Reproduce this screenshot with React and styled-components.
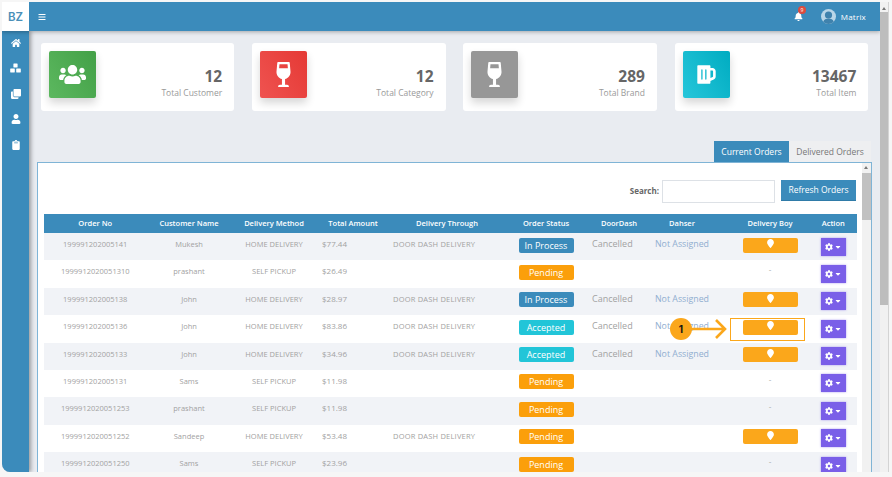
import React from 'react';
import styled, { createGlobalStyle } from 'styled-components';
import { FaHome, FaClone, FaUser, FaClipboard, FaBars, FaBell, FaUsers, FaWineGlassAlt, FaBeer, FaCog, FaCaretDown, FaMapMarker } from 'react-icons/fa';

const Global = createGlobalStyle`
  html, body { margin: 0; padding: 0; width: 892px; height: 477px; overflow: hidden; background: #f6f6f6; }
  body { font-family: "Open Sans", "Noto Sans", sans-serif; }
  * { box-sizing: border-box; }
`;

const Frame = styled.div`
  width: 892px; height: 477px; padding: 2px 0 5px 2px; display: flex; background: #f6f6f6;
`;
const Window = styled.div`
  flex: 1; min-width: 0; display: flex; overflow: hidden; border-radius: 0 0 0 8px; background: #e9ecf1;
`;
const Page = styled.div`
  width: 878px; flex: none; display: flex; flex-direction: column; min-width: 0; overflow: hidden;
`;
const TopBar = styled.header`
  height: 29px; flex: none; display: flex; align-items: center; background: #3b8bbb; color: #fff;
  box-shadow: 0 1px 4px rgba(0,0,0,.3); position: relative; z-index: 2;
`;
const Logo = styled.div`
  width: 27px; height: 29px; background: #fff; color: #4a8fb8; font: 600 11.5px "Inter", sans-serif;
  display: flex; align-items: center; justify-content: center;
`;
const Burger = styled.span` margin-left: 9px; font-size: 8px; display: flex; `;
const TopRight = styled.div` margin-left: auto; display: flex; align-items: center; padding-right: 14px; `;
const Bell = styled.span` position: relative; font-size: 9px; display: flex; margin-right: 18px; `;
const Badge = styled.span`
  position: absolute; top: -6px; left: 4px; width: 8px; height: 8px; border-radius: 50%; background: #dc4b3e;
  font: 5px/8px "Open Sans", sans-serif; text-align: center;
`;
const AvatarIcon = styled.svg` width: 15px; height: 15px; margin-right: 5px; display: block; `;
const UserName = styled.span` font-size: 8px; letter-spacing: .2px; `;
const Body = styled.div` flex: 1; display: flex; min-height: 0; `;
const Side = styled.nav`
  width: 27px; flex: none; background: #3b8bbb; display: flex; flex-direction: column; align-items: center;
  padding-top: 7px; gap: 15.4px; color: #fff; font-size: 10px; box-shadow: 2px 0 4px rgba(0,0,0,.35);
  svg { display: block; }
`;
const Main = styled.main` flex: 1; min-width: 0; padding: 11.5px 0 0 8px; `;
const Stats = styled.div` display: grid; grid-template-columns: repeat(4, 193.7px); gap: 17.7px; margin-left: 3.5px; `;
const Card = styled.div`
  height: 68px; background: #fff; border-radius: 3px; padding: 8px; display: flex; justify-content: space-between;
`;
const IconBox = styled.div`
  width: 47px; height: 47px; border-radius: 2px; color: #fff; font-size: ${p => p.$size}px; display: flex; align-items: center; justify-content: center;
  background: ${p => p.$bg}; box-shadow: 0 5px 8px rgba(0,0,0,.16);
`;
const StatText = styled.div` text-align: right; padding: 16px 4px 0 0; `;
const Num = styled.div` font: 700 15.5px/18px "Open Sans", sans-serif; color: #666; `;
const Label = styled.div` font: 8.5px/12px "Open Sans", sans-serif; color: #999; margin-top: 2.5px; `;
const Tabs = styled.div` display: flex; justify-content: flex-end; margin-top: 30px; width: 834px; `;
const Tab = styled.div`
  height: 21px; width: ${p => p.$w}px; text-align: center; font: 8.5px/21px "Open Sans", sans-serif;
  background: ${p => p.$on ? '#3b8bbb' : '#eeeff1'}; color: ${p => p.$on ? '#fff' : '#777'};
`;
const Panel = styled.section`
  width: 834.5px; height: 400px; background: #fff; border: 1px solid #7fb4d6; padding: 0 14.5px 0 5.5px; position: relative; overflow: hidden;
`;
const Scroll = styled.div`
  position: absolute; top: 0; right: 0; width: 9px; height: 100%; background: #f1f1f1;
  display: flex; flex-direction: column; align-items: center; padding-top: 3px;
`;
const Arrow = styled.span`
  width: 0; height: 0; border: 2px solid transparent; border-top: none; border-bottom: 3px solid #777;
`;
const Thumb = styled.div` width: 9px; height: 47px; margin-top: 4px; background: #c1c1c1; `;
const Tools = styled.div` height: 51px; display: flex; align-items: flex-start; justify-content: flex-end; padding-top: 17px; `;
const SearchLabel = styled.label` font: 700 8px/22px "Open Sans", sans-serif; color: #666; margin-right: 3px; `;
const SearchInput = styled.div` width: 113px; height: 23px; border: 1px solid #dde1e6; margin-right: 6px; `;
const Refresh = styled.button`
  width: 75px; height: 21px; border: none; border-bottom: 1px solid #2f7ba8; background: #3b8bbb; color: #fff; padding: 0; font: 8.5px "Open Sans", sans-serif;
`;
const Table = styled.table`
  width: 812.5px; border-collapse: collapse; table-layout: fixed; font: 7.5px "Open Sans", sans-serif;
  th { background: #3b8bbb; color: #fff; font-weight: 600; height: 19.5px; padding: 0; font-size: 7.5px; white-space: nowrap; }
  td { height: 27.4px; padding: 4px 0 0; color: #a2a2a2; text-align: center; vertical-align: top; line-height: 14px; white-space: nowrap; }
  td.amt { text-align: left; padding-left: 5px; font-size: 8px; }
  td.through { text-align: left; padding-left: 4px; letter-spacing: .2px; }
  td.door { font-size: 9px; text-align: left; padding-left: 5px; }
  td.wide { padding-top: 2px; font-size: 9px; }
  td.boy { padding: 2px 0 0 17px; font-size: 8px; }
  td.act { padding-top: 2px; }
  tbody tr:nth-child(odd) { background: #f1f3f7; }
  .shift { padding-left: 17px; }
`;
const Status = styled.span`
  display: inline-block; width: 55px; height: 15px; border-radius: 2px; color: #fff; font-size: 9px; line-height: 15px; margin-top: 2.5px;
  background: ${p => p.$c};
`;
const Assigned = styled.span` color: #90aed0; font-size: 8.8px; `;
const BoyBtn = styled.span`
  display: inline-flex; align-items: center; justify-content: center; padding-bottom: 3px; width: 55px; height: 15px; border-radius: 2px; background: #fba71b; color: #fff; font-size: 9px; margin-top: 2.5px;
`;
const ActionBtn = styled.span`
  display: inline-flex; align-items: center; justify-content: center; gap: 1px; width: 25px; height: 18px; background: #7a5fe8; color: #fff; font-size: 8px; margin-top: 2.5px;
  box-shadow: 0 0 2px rgba(122,95,232,.6);
`;
const Callout = styled.div`
  position: absolute; left: 670px; top: 318px; display: flex; align-items: center; pointer-events: none;
`;
const Dot = styled.span`
  width: 22px; height: 22px; border-radius: 50%; background: #fba71b; color: #111; font: 700 10px/22px "Inter", sans-serif; text-align: center; flex: none;
`;
const ArrowMark = styled.svg` margin-left: -1px; display: block; `;
const HighlightBox = styled.div`
  position: absolute; left: 730px; top: 318px; width: 75px; height: 23px; border: 1.4px solid #fba71b;
`;
const Rail = styled.div`
  width: 8px; flex: none; background: #f1f1f1; display: flex; flex-direction: column; align-items: center; padding-top: 5px;
`;
const RailThumb = styled.div` width: 8px; height: 293px; margin-top: 2px; background: #bdbdbd; `;
const Gutter = styled.div` width: 4px; flex: none; background: #f6f6f6; border-left: 1px solid #d4d4d4; `;

const rows = [
  ['199991202005141','Mukesh','HOME DELIVERY','$77.44',1,'In Process','#3b8bbb',1],
  ['1999912020051310','prashant','SELF PICKUP','$26.49',0,'Pending','#fb9f0b',0],
  ['199991202005138','John','HOME DELIVERY','$28.97',1,'In Process','#3b8bbb',1],
  ['199991202005136','John','HOME DELIVERY','$83.86',1,'Accepted','#22c5d8',1],
  ['199991202005133','John','HOME DELIVERY','$34.96',1,'Accepted','#22c5d8',1],
  ['199991202005131','Sams','SELF PICKUP','$11.98',0,'Pending','#fb9f0b',0],
  ['1999912020051253','prashant','SELF PICKUP','$11.98',0,'Pending','#fb9f0b',0],
  ['1999912020051252','Sandeep','HOME DELIVERY','$53.48',1,'Pending','#fb9f0b',2],
  ['1999912020051250','Sams','SELF PICKUP','$23.96',0,'Pending','#fb9f0b',0],
];
const widths = [103.5,84,86,72,116,82,64,62,97,46.5];
const heads = ['Order No','Customer Name','Delivery Method','Total Amount','Delivery Through','Order Status','DoorDash','Dahser','Delivery Boy','Action'];

const BoxesIcon = () => (
  <svg width="11" height="10" viewBox="0 0 11 10" fill="currentColor">
    <rect x="3.4" y="0.5" width="4.2" height="4" rx=".4" />
    <rect x="0.2" y="5.5" width="4.6" height="4" rx=".4" />
    <rect x="6.2" y="5.5" width="4.6" height="4" rx=".4" />
  </svg>
);

export default function App() {
  return (
    <Frame>
      <Global />
      <Window>
        <Page>
          <TopBar>
            <Logo>BZ</Logo>
            <Burger><FaBars /></Burger>
            <TopRight>
              <Bell><FaBell /><Badge>9</Badge></Bell>
              <AvatarIcon viewBox="0 0 15 15">
                <circle cx="7.5" cy="7.5" r="7.5" fill="#b9d6e8" />
                <circle cx="7.5" cy="6" r="3.6" fill="#3f82ad" />
                <path d="M2.2 12.8C3 10.4 5 9.6 7.5 9.6s4.5.8 5.3 3.2A7.5 7.5 0 0 1 2.2 12.8Z" fill="#3f82ad" />
              </AvatarIcon>
              <UserName>Matrix</UserName>
            </TopRight>
          </TopBar>
          <Body>
            <Side><FaHome /><BoxesIcon /><FaClone /><FaUser /><FaClipboard /></Side>
            <Main>
              <Stats>
                {[['12','Total Customer','linear-gradient(60deg,#5cb85f,#43a047)',<FaUsers />,27],
                  ['12','Total Category','linear-gradient(60deg,#ef5350,#e53935)',<FaWineGlassAlt />,25],
                  ['289','Total Brand','#979797',<FaWineGlassAlt />,25],
                  ['13467','Total Item','linear-gradient(60deg,#26c6da,#00acc1)',<FaBeer />,21]].map(([n,l,b,i,s]) => (
                  <Card key={l}>
                    <IconBox $bg={b} $size={s}>{i}</IconBox>
                    <StatText><Num>{n}</Num><Label>{l}</Label></StatText>
                  </Card>
                ))}
              </Stats>
              <Tabs>
                <Tab $on $w={75}>Current Orders</Tab>
                <Tab $w={82}>Delivered Orders</Tab>
              </Tabs>
              <Panel>
                <Scroll><Arrow /><Thumb /></Scroll>
                <Tools>
                  <SearchLabel>Search:</SearchLabel>
                  <SearchInput />
                  <Refresh>Refresh Orders</Refresh>
                </Tools>
                <Table>
                  <colgroup>{widths.map((w,i) => <col key={i} style={{width:w}} />)}</colgroup>
                  <thead><tr>{heads.map(h => <th key={h} className={h === 'Delivery Boy' ? 'shift' : undefined}>{h}</th>)}</tr></thead>
                  <tbody>
                    {rows.map(r => (
                      <tr key={r[0]}>
                        <td>{r[0]}</td><td>{r[1]}</td><td>{r[2]}</td><td className="amt">{r[3]}</td>
                        <td className="through">{r[4] ? 'DOOR DASH DELIVERY' : ''}</td>
                        <td className="wide"><Status $c={r[6]}>{r[5]}</Status></td>
                        <td className="door">{r[7] === 1 ? 'Cancelled' : ''}</td>
                        <td>{r[7] === 1 ? <Assigned>Not Assigned</Assigned> : ''}</td>
                        <td className="boy">{r[7] ? <BoyBtn><FaMapMarker /></BoyBtn> : '-'}</td>
                        <td className="act"><ActionBtn><FaCog /><FaCaretDown /></ActionBtn></td>
                      </tr>
                    ))}
                  </tbody>
                </Table>
              </Panel>
            </Main>
          </Body>
        </Page>
        <Rail><Arrow /><RailThumb /></Rail>
        <Gutter />
      </Window>
      <HighlightBox />
      <Callout>
        <Dot>1</Dot>
        <ArrowMark width="36" height="22" viewBox="0 0 36 22"><path d="M0 11H34M25 2l9 9-9 9" fill="none" stroke="#fba71b" strokeWidth="2.6" /></ArrowMark>
      </Callout>
    </Frame>
  );
}
